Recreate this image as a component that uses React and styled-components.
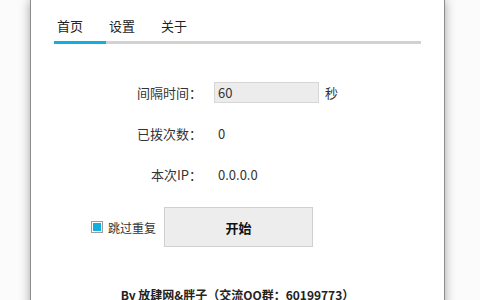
import React from 'react';
import styled, { createGlobalStyle } from 'styled-components';

const GlobalStyle = createGlobalStyle`
  html, body {
    margin: 0;
    padding: 0;
    background: #fbfbfb;
    overflow: hidden;
  }
  body {
    font-family: "Noto Sans CJK SC", "Noto Sans", sans-serif;
  }
`;

const Page = styled.div`
  width: 480px;
  height: 300px;
  padding-left: 30px;
  box-sizing: border-box;
  overflow: hidden;
`;

const Window = styled.div`
  width: 415px;
  height: 320px;
  box-sizing: border-box;
  background: #ffffff;
  border-left: 1px solid #8c8c8c;
  border-right: 1px solid #8c8c8c;
  box-shadow: 0 0 10px rgba(0, 0, 0, 0.35);
  padding: 15px 23px 0 23px;
`;

const TabBar = styled.div`
  display: flex;
  border-bottom: 3px solid #d2d2d2;
`;

const Tab = styled.div`
  width: 52px;
  height: 29px;
  box-sizing: border-box;
  padding-left: 3px;
  font-size: 13px;
  line-height: 21px;
  color: #222;
  margin-bottom: -3px;
  border-bottom: 3px solid ${p => (p.$active ? '#12aede' : 'transparent')};
`;

const Form = styled.div`
  margin-top: 38px;
  padding-left: 37px;
  display: flex;
  flex-direction: column;
  gap: 20px;
`;

const Row = styled.div`
  display: flex;
  align-items: center;
  height: 21px;
  font-size: 13px;
  color: #333;
`;

const Label = styled.div`
  width: 111px;
  text-align: right;
  margin-right: 12px;
  white-space: nowrap;
`;

const Value = styled.div`
  padding-left: 4px;
`;

const Input = styled.div`
  width: 105px;
  height: 21px;
  box-sizing: border-box;
  background: #ececec;
  border: 1px solid #d6d6d6;
  padding-left: 3px;
  line-height: 19px;
`;

const Unit = styled.span`
  margin-left: 6px;
`;

const ActionRow = styled.div`
  display: flex;
  align-items: center;
  margin-top: 2px;
  font-size: 12px;
  color: #333;
`;

const Check = styled.span`
  width: 12px;
  height: 12px;
  box-sizing: border-box;
  border: 1px solid #9c9c9c;
  padding: 1px;
  background: #fff;
  display: inline-block;
  margin-right: 5px;

  &::after {
    content: '';
    display: block;
    width: 100%;
    height: 100%;
    background: #12aede;
  }
`;

const CheckLabel = styled.span`
  margin-right: 8px;
`;

const Button = styled.div`
  width: 149px;
  height: 40px;
  box-sizing: border-box;
  background: #ededed;
  border: 1px solid #d0d0d0;
  display: flex;
  align-items: center;
  justify-content: center;
  font-size: 13px;
  font-weight: bold;
  color: #111;
`;

const Footer = styled.div`
  margin-top: 38px;
  text-align: center;
  font-size: 12px;
  font-weight: bold;
  color: #222;
  line-height: 19px;
  white-space: nowrap;
`;

const App = () => (
  <>
    <GlobalStyle />
    <Page>
      <Window>
        <TabBar>
          <Tab $active>首页</Tab>
          <Tab>设置</Tab>
          <Tab>关于</Tab>
        </TabBar>

        <Form>
          <Row>
            <Label>间隔时间：</Label>
            <Input>60</Input>
            <Unit>秒</Unit>
          </Row>
          <Row>
            <Label>已拨次数：</Label>
            <Value>0</Value>
          </Row>
          <Row>
            <Label>本次IP：</Label>
            <Value>0.0.0.0</Value>
          </Row>
          <ActionRow>
            <Check />
            <CheckLabel>跳过重复</CheckLabel>
            <Button>开始</Button>
          </ActionRow>
        </Form>

        <Footer>By 放肆网&amp;胖子（交流QQ群：60199773）</Footer>
      </Window>
    </Page>
  </>
);

export default App;
